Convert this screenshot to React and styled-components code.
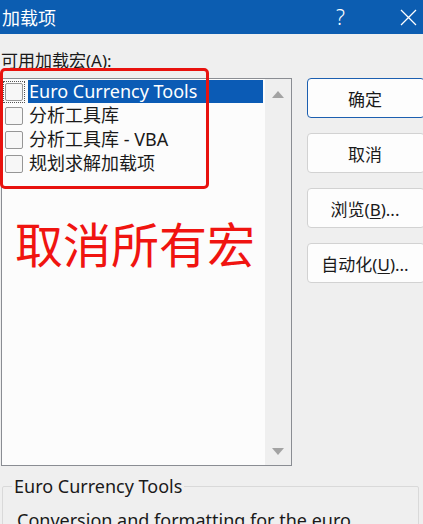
import React from "react";
import styled, { createGlobalStyle } from "styled-components";

const Global = createGlobalStyle`
  html, body { margin: 0; padding: 0; background: #efefef; }
  body { font-family: "Noto Sans", "Noto Sans CJK SC", sans-serif; color: #1a1a1a; }
`;

const Window = styled.div`
  width: 423px;
  height: 524px;
  overflow: hidden;
  display: flex;
  flex-direction: column;
  background: #efefef;
`;

const TitleBar = styled.div`
  height: 34px;
  flex: none;
  background: #0c5db1;
  color: #fff;
  display: flex;
  align-items: center;
  padding-left: 2px;
`;

const Title = styled.div`
  font-family: "Noto Sans", "Noto Sans CJK SC", sans-serif;
  font-size: 18px;
  flex: 1;
`;

const Help = styled.div`
  font-size: 21px;
  font-weight: 300;
  width: 20px;
  margin-right: 44px;
`;

const Close = styled.svg`
  width: 17px;
  height: 17px;
  margin-right: 6px;
`;

const Main = styled.div`
  display: grid;
  grid-template-columns: 292px 1fr;
  grid-template-rows: auto 388px;
  column-gap: 15px;
  row-gap: 6px;
  padding-top: 16px;
`;

const Label = styled.div`
  grid-column: 1 / 3;
  font-family: "Noto Sans", "Noto Sans CJK SC", sans-serif;
  font-size: 17px;
  line-height: 22px;
  padding-left: 1px;
`;

const ListBox = styled.div`
  position: relative;
  margin-left: 1px;
  border: 1px solid #8a8d93;
  background: #fcfcfc;
  display: flex;
`;

const Items = styled.div`
  flex: 1;
  padding: 1px 2px 0 1px;
  display: flex;
  flex-direction: column;
  gap: 1px;
`;

const Row = styled.div`
  display: flex;
  align-items: center;
  height: 23px;
`;

const Focus = styled.div`
  width: 22px;
  height: 22px;
  display: flex;
  align-items: center;
  justify-content: center;
  outline: ${(p) => (p.$focus ? "1px dotted #555" : "none")};
  outline-offset: -1px;
`;

const Box = styled.div`
  width: 18px;
  height: 18px;
  box-sizing: border-box;
  border: 1px solid #969696;
  border-radius: 2px;
  background: #f7f7f7;
`;

const ItemText = styled.div`
  flex: 1;
  margin-left: 3px;
  height: 23px;
  line-height: 23px;
  padding-left: 1px;
  font-size: 18px;
  white-space: nowrap;
  background: ${(p) => (p.$selected ? "#0b5bb5" : "transparent")};
  color: ${(p) => (p.$selected ? "#fff" : "#1a1a1a")};
`;

const ScrollBar = styled.div`
  width: 26px;
  background: #efefef;
  display: flex;
  flex-direction: column;
  justify-content: space-between;
  align-items: center;
  padding: 12px 0 10px;
`;

const Arrow = styled.div`
  width: 0;
  height: 0;
  border-left: 6px solid transparent;
  border-right: 6px solid transparent;
  ${(p) =>
    p.$down
      ? "border-top: 7px solid #a3a3a3;"
      : "border-bottom: 7px solid #a3a3a3;"}
`;

const RedFrame = styled.div`
  position: absolute;
  left: -2px;
  top: -11px;
  width: 209px;
  height: 121px;
  box-sizing: border-box;
  border: 3px solid #e8120e;
  border-radius: 5px;
  pointer-events: none;
`;

const Annotation = styled.div`
  position: absolute;
  left: 13px;
  top: 138px;
  font-family: "Noto Sans CJK SC", sans-serif;
  font-size: 48px;
  line-height: 50px;
  color: #f01410;
  white-space: nowrap;
`;

const Buttons = styled.div`
  display: flex;
  flex-direction: column;
  gap: 15px;
`;

const Button = styled.button`
  width: 118px;
  height: 40px;
  box-sizing: border-box;
  border: 1px solid ${(p) => (p.$primary ? "#1c5fb0" : "#d2d2d2")};
  border-radius: 4px;
  background: #fdfdfd;
  font-family: "Noto Sans", "Noto Sans CJK SC", sans-serif;
  font-size: 17px;
  color: #1a1a1a;
  padding: 0;
  padding-right: 2px;
  u { text-decoration-thickness: 1px; text-underline-offset: 2px; }
`;

const Group = styled.fieldset`
  margin: 9px 4px 0 2px;
  border: 1px solid #d9d9d9;
  border-radius: 2px;
  padding: 0 14px 0 14px;
  min-width: 0;
`;

const Legend = styled.legend`
  font-size: 18px;
  line-height: 22px;
  padding: 0 2px;
  margin-left: -5px;
`;

const Desc = styled.div`
  font-size: 18px;
  line-height: 22px;
  margin-top: 12px;
  white-space: nowrap;
`;

const items = ["Euro Currency Tools", "分析工具库", "分析工具库 - VBA", "规划求解加载项"];

export default function App() {
  return (
    <Window>
      <Global />
      <TitleBar>
        <Title>加载项</Title>
        <Help>?</Help>
        <Close viewBox="0 0 17 17">
          <path d="M1 1 L16 16 M16 1 L1 16" stroke="#fff" strokeWidth="1.3" fill="none" />
        </Close>
      </TitleBar>
      <Main>
        <Label>可用加载宏(A):</Label>
        <ListBox>
          <Items>
            {items.map((t, i) => (
              <Row key={t}>
                <Focus $focus={i === 0}>
                  <Box />
                </Focus>
                <ItemText $selected={i === 0}>{t}</ItemText>
              </Row>
            ))}
          </Items>
          <ScrollBar>
            <Arrow />
            <Arrow $down />
          </ScrollBar>
          <RedFrame />
          <Annotation>取消所有宏</Annotation>
        </ListBox>
        <Buttons>
          <Button $primary>确定</Button>
          <Button>取消</Button>
          <Button>
            浏览(<u>B</u>)...
          </Button>
          <Button>
            自动化(<u>U</u>)...
          </Button>
        </Buttons>
      </Main>
      <Group>
        <Legend>Euro Currency Tools</Legend>
        <Desc>Conversion and formatting for the euro</Desc>
      </Group>
    </Window>
  );
}
